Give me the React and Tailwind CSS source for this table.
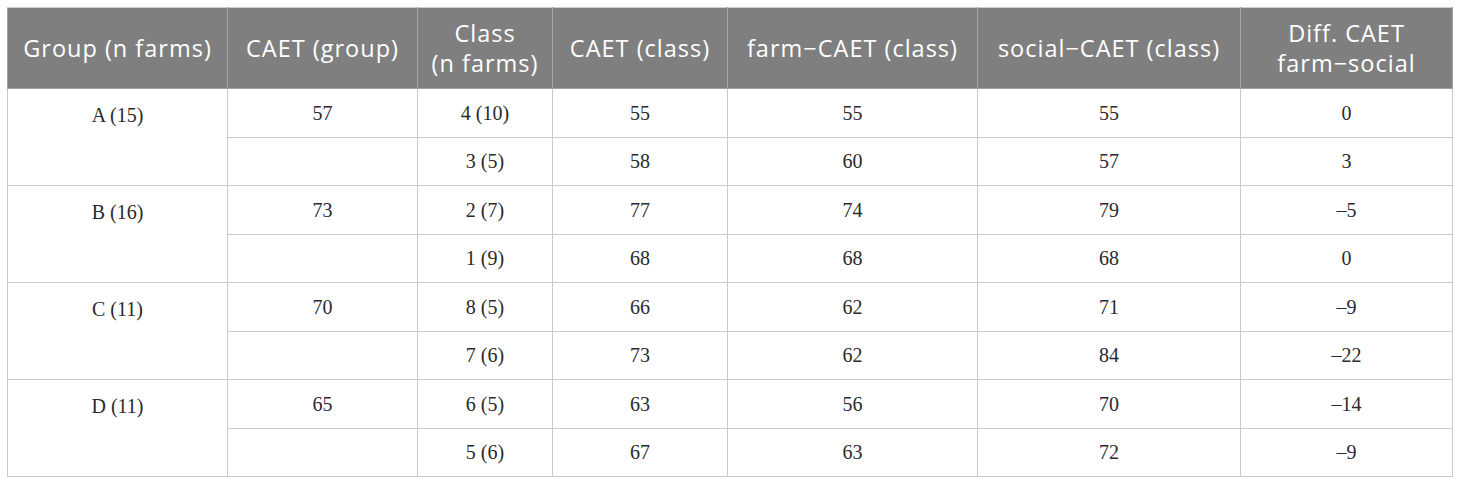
import React from 'react';

const columns = [
  { label: 'Group (n farms)', width: 'w-[220px]' },
  { label: 'CAET (group)', width: 'w-[190px]' },
  { label: ['Class', '(n farms)'], width: 'w-[135px]' },
  { label: 'CAET (class)', width: 'w-[175px]' },
  { label: 'farm\u2212CAET (class)', width: 'w-[250px]' },
  { label: 'social\u2212CAET (class)', width: 'w-[263px]' },
  { label: ['Diff. CAET', 'farm\u2212social'], width: 'w-[212px]' },
];

const groups = [
  { group: 'A (15)', caet: '57', rows: [['4 (10)', '55', '55', '55', '0'], ['3 (5)', '58', '60', '57', '3']] },
  { group: 'B (16)', caet: '73', rows: [['2 (7)', '77', '74', '79', '\u20135'], ['1 (9)', '68', '68', '68', '0']] },
  { group: 'C (11)', caet: '70', rows: [['8 (5)', '66', '62', '71', '\u20139'], ['7 (6)', '73', '62', '84', '\u201322']] },
  { group: 'D (11)', caet: '65', rows: [['6 (5)', '63', '56', '70', '\u201314'], ['5 (6)', '67', '63', '72', '\u20139']] },
];

const cell = 'border border-[#c9c9c9] text-center align-middle p-0';

export default function App() {
  return (
    <div className="bg-white w-[1460px] h-[483px] pt-[7px] pl-[7px]">
      <table className="table-fixed border-collapse w-[1445px] text-[#2a2a2a]">
        <thead>
          <tr className="h-[81px] bg-[#7f7f7f] text-white font-['Open_Sans',sans-serif] text-[23.5px] leading-[30px] tracking-[1px]">
            {columns.map((col, i) => (
              <th key={i} className={`${col.width} border border-[#a3a3a3] border-t-[#cfcfcf] font-normal text-center align-middle px-0`}>
                {Array.isArray(col.label) ? (
                  <>
                    <div>{col.label[0]}</div>
                    <div>{col.label[1]}</div>
                  </>
                ) : (
                  col.label
                )}
              </th>
            ))}
          </tr>
        </thead>
        <tbody className="font-['Liberation_Serif',serif] text-[20px]">
          {groups.map((g) =>
            g.rows.map((r, idx) => (
              <tr key={g.group + idx} className="h-[48.5px]">
                {idx === 0 && (
                  <td rowSpan={2} className="border border-[#c9c9c9] text-center align-top pt-[11px] p-0">
                    {g.group}
                  </td>
                )}
                <td className={cell}>{idx === 0 ? g.caet : ''}</td>
                {r.map((v, j) => (
                  <td key={j} className={cell}>
                    {v}
                  </td>
                ))}
              </tr>
            ))
          )}
        </tbody>
      </table>
    </div>
  );
}
